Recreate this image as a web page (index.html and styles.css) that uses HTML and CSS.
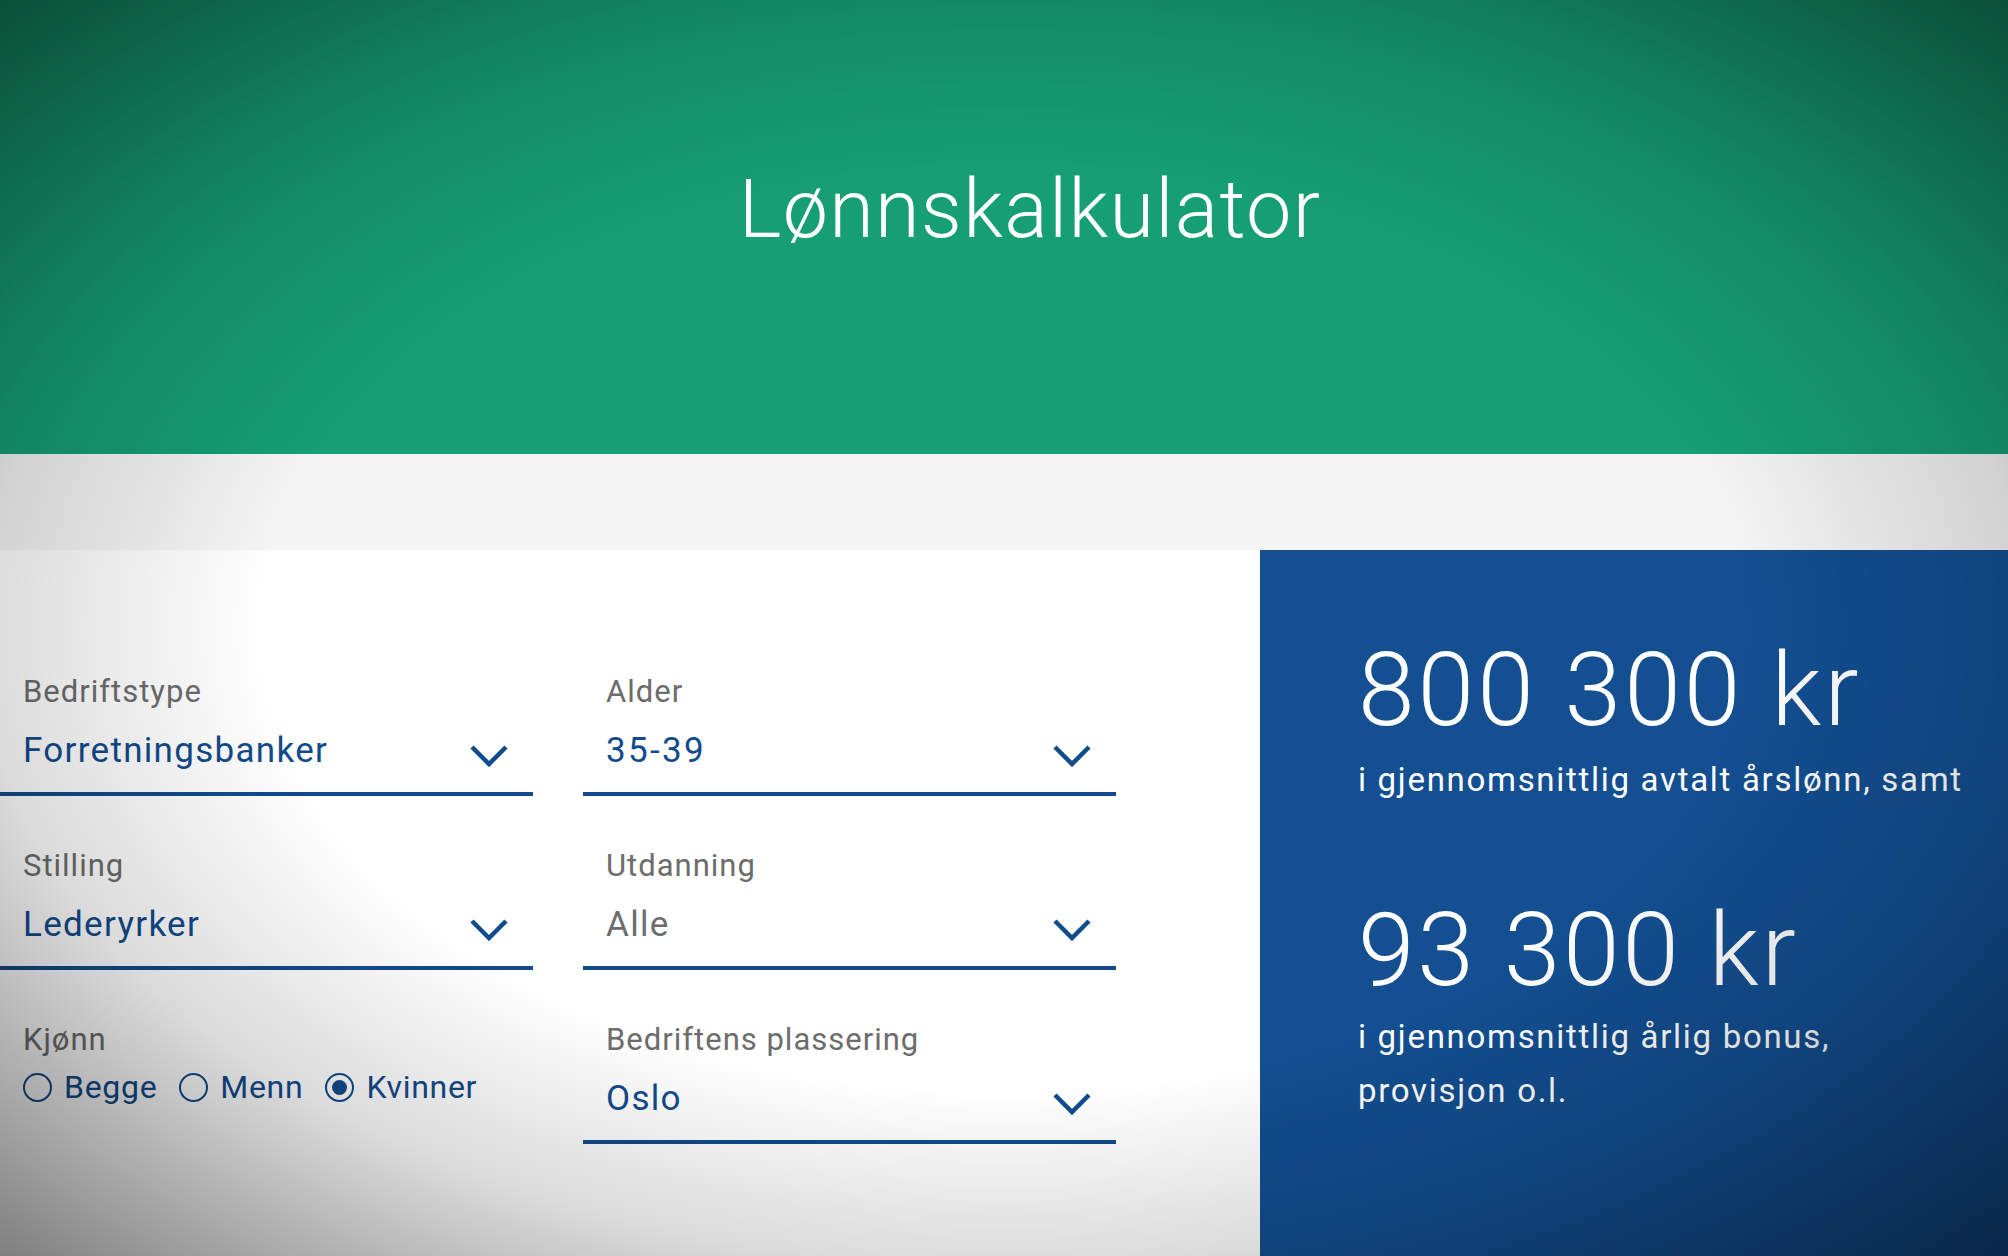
FILE: index.html
```html
<!DOCTYPE html>
<html lang="no">
<head>
<meta charset="utf-8">
<title>Lønnskalkulator</title>
<link rel="stylesheet" href="styles.css">
</head>
<body>
<header class="hero">
  <h1 class="hero-title">Lønnskalkulator</h1>
</header>
<div class="band"></div>
<main class="calc">
  <section class="form">
    <div class="field">
      <div class="field-label">Bedriftstype</div>
      <div class="field-value">
        <span class="value">Forretningsbanker</span>
        <svg class="chev" viewBox="0 0 38 22" width="38" height="22"><polyline points="2,2 19,19 36,2"/></svg>
      </div>
    </div>
    <div class="field">
      <div class="field-label">Alder</div>
      <div class="field-value">
        <span class="value value-num">35-39</span>
        <svg class="chev" viewBox="0 0 38 22" width="38" height="22"><polyline points="2,2 19,19 36,2"/></svg>
      </div>
    </div>
    <div class="field">
      <div class="field-label">Stilling</div>
      <div class="field-value">
        <span class="value">Lederyrker</span>
        <svg class="chev" viewBox="0 0 38 22" width="38" height="22"><polyline points="2,2 19,19 36,2"/></svg>
      </div>
    </div>
    <div class="field">
      <div class="field-label">Utdanning</div>
      <div class="field-value">
        <span class="value value-muted">Alle</span>
        <svg class="chev" viewBox="0 0 38 22" width="38" height="22"><polyline points="2,2 19,19 36,2"/></svg>
      </div>
    </div>
    <div class="field field-plain">
      <div class="field-label">Kjønn</div>
      <div class="radios">
        <span class="radio"><span class="dot"></span>Begge</span>
        <span class="radio"><span class="dot"></span>Menn</span>
        <span class="radio radio-on"><span class="dot"></span>Kvinner</span>
      </div>
    </div>
    <div class="field">
      <div class="field-label">Bedriftens plassering</div>
      <div class="field-value">
        <span class="value">Oslo</span>
        <svg class="chev" viewBox="0 0 38 22" width="38" height="22"><polyline points="2,2 19,19 36,2"/></svg>
      </div>
    </div>
  </section>
  <aside class="result">
    <div class="amount">800 300 kr</div>
    <p class="desc">i gjennomsnittlig avtalt årslønn, samt</p>
    <div class="amount amount-2">93 300 kr</div>
    <p class="desc desc-2">i gjennomsnittlig årlig bonus,<br>provisjon o.l.</p>
  </aside>
</main>
<div class="vignette"></div>
</body>
</html>
```
FILE: styles.css
```css
html, body {
  margin: 0;
  padding: 0;
}
body {
  width: 2008px;
  height: 1256px;
  overflow: hidden;
  font-family: Roboto, "Liberation Sans", Arial, sans-serif;
  background: #ffffff;
}

.hero {
  height: 454px;
  background: #169f73;
  box-sizing: border-box;
  padding-top: 170px;
  padding-left: 52px;
  text-align: center;
}
.hero-title {
  margin: 0;
  font-weight: 300;
  font-size: 81px;
  line-height: 80px;
  color: #ffffff;
  letter-spacing: 1.3px;
}

.band {
  height: 96px;
  background: #f5f5f5;
}

.calc {
  display: flex;
  height: 706px;
}

.form {
  width: 1260px;
  box-sizing: border-box;
  padding-top: 124px;
  display: grid;
  grid-template-columns: 533px 533px;
  column-gap: 50px;
  row-gap: 52px;
  align-content: start;
}

.field {
  border-bottom: 4px solid #124b8c;
  padding: 0 25px 20px 23px;
}
.field-plain {
  border-bottom: 4px solid transparent;
}
.field-label {
  font-size: 31px;
  line-height: 36px;
  color: #6d6d6d;
  letter-spacing: 1px;
  margin-bottom: 20px;
}
.field-value {
  display: flex;
  align-items: center;
  justify-content: space-between;
  height: 42px;
}
.value {
  font-size: 35px;
  line-height: 42px;
  letter-spacing: 1.3px;
  color: #124b8c;
}
.value-num {
  letter-spacing: 2.3px;
}
.value-muted {
  color: #6d6d6d;
}
.chev {
  margin-top: 10px;
  fill: none;
  stroke: #124b8c;
  stroke-width: 4.5;
}

.radios {
  display: flex;
  align-items: center;
  gap: 22px;
  margin-top: -11px;
}
.radio {
  display: flex;
  align-items: center;
  gap: 12px;
  font-size: 32px;
  line-height: 40px;
  letter-spacing: 0.7px;
  color: #124b8c;
}
.dot {
  width: 25px;
  height: 25px;
  border: 2px solid #124b8c;
  border-radius: 50%;
  box-sizing: content-box;
  position: relative;
}
.radio-on .dot::after {
  content: "";
  position: absolute;
  left: 5px;
  top: 5px;
  width: 15px;
  height: 15px;
  border-radius: 50%;
  background: #124b8c;
}

.result {
  flex: 1;
  background: #134f91;
  box-sizing: border-box;
  padding: 85px 0 0 98px;
  color: #ffffff;
}
.amount {
  font-size: 102px;
  font-weight: 300;
  line-height: 110px;
  letter-spacing: 3px;
}
.amount-2 {
  margin-top: 88px;
  letter-spacing: 2.6px;
}
.desc {
  margin: 8px 0 0;
  font-size: 33px;
  line-height: 54px;
  font-weight: 400;
  letter-spacing: 1.7px;
}
.desc-2 {
  margin-top: 5px;
}

.vignette {
  position: fixed;
  inset: 0;
  pointer-events: none;
  background: radial-gradient(ellipse farthest-corner at 50% 50%,
    rgba(0,0,0,0) 52%,
    rgba(0,0,0,0.14) 72%,
    rgba(0,0,0,0.5) 100%);
}
```
